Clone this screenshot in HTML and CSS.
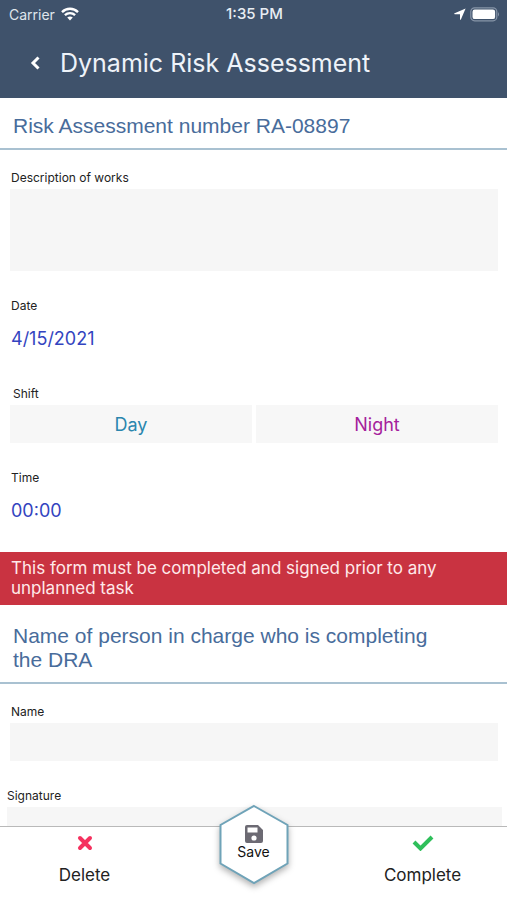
FILE: index.html
```html
<!DOCTYPE html>
<html lang="en">
<head>
<meta charset="utf-8">
<meta name="viewport" content="width=device-width, initial-scale=1">
<title>Dynamic Risk Assessment</title>
<link rel="stylesheet" href="styles.css">
</head>
<body>
<div class="app">
  <header class="header">
    <div class="status">
      <span class="carrier">Carrier
        <svg width="18" height="14" viewBox="0 0 18 14" fill="none" stroke="currentColor" stroke-width="2.4" aria-hidden="true"><path d="M1 5.1C5.5.7 12.500.7 17 5.100M3.900 8.100c2.900-2.700 7.300-2.700 10.200 0"/><path d="M9 13.400 6.200 10.600q2.800-2.200 5.600 0z" fill="currentColor" stroke="none"/></svg>
      </span>
      <span class="clock">1:35 PM</span>
      <span class="indicators">
        <svg width="12" height="12" viewBox="0 0 12 12" fill="currentColor" aria-hidden="true"><path d="M11.600.4 6.900 11.400c-.3.700-.9.500-.9-.1V6.200H.8c-.8 0-.9-.7-.2-1z"/></svg>
        <svg width="30" height="15" viewBox="0 0 30 15" aria-hidden="true"><rect x=".8" y=".8" width="26" height="13" rx="3.800" fill="none" stroke="#8795a8" stroke-width="1.200"/><rect x="2.500" y="2.500" width="22.600" height="9.600" rx="2.200" fill="#fff"/><path d="M28 5v4.600q2-2.300 0-4.600z" fill="#8795a8"/></svg>
      </span>
    </div>
    <div class="titlebar">
      <button class="back" type="button" aria-label="Back">
        <svg width="10" height="14" viewBox="0 0 10 14" fill="none" stroke="currentColor" stroke-width="3" aria-hidden="true"><path d="M8.500 1.500 3 7l5.500 5.500"/></svg>
      </button>
      <h1>Dynamic Risk Assessment</h1>
    </div>
  </header>

  <main class="form">
    <h2 class="section">Risk Assessment number RA-08897</h2>
    <div class="group">
      <div class="field">
        <label for="works">Description of works</label>
        <textarea id="works" class="box tall"></textarea>
      </div>
      <div class="field">
        <label for="date">Date</label>
        <input id="date" class="value" type="text" value="4/15/2021">
      </div>
      <div class="field" role="group" aria-labelledby="shift">
        <span id="shift" class="caption">Shift</span>
        <div class="choices">
          <button class="choice day" type="button">Day</button>
          <button class="choice night" type="button">Night</button>
        </div>
      </div>
      <div class="field">
        <label for="time">Time</label>
        <input id="time" class="value" type="text" value="00:00">
      </div>
    </div>
    <p class="alert">This form must be completed and signed prior to any unplanned task</p>
    <h2 class="section">Name of person in charge who is completing the DRA</h2>
    <div class="group">
      <div class="field">
        <label for="name">Name</label>
        <input id="name" class="box" type="text">
      </div>
      <div class="field wide">
        <label for="signature">Signature</label>
        <textarea id="signature" class="box tall"></textarea>
      </div>
    </div>
  </main>

  <footer class="actions">
    <button class="action" type="button">
      <svg width="16" height="16" viewBox="0 0 16 16" fill="none" stroke="#f5325f" stroke-width="4" stroke-linecap="round" aria-hidden="true"><path d="m3 3 10 10M13 3 3 13"/></svg>
      Delete
    </button>
    <button class="save" type="button">
      <svg class="hexagon" width="84" height="94" viewBox="0 0 84 94" aria-hidden="true"><path d="M42 8 75.500 27v38.500L42 85 8.500 65.500V27z" fill="#fff" stroke="#6fa3b8" stroke-width="2"/></svg>
      <svg width="18" height="18" viewBox="0 0 18 18" aria-hidden="true"><path fill="#6c6a73" fill-rule="evenodd" d="M2 0h11l5 5v11q0 2-2 2H2q-2 0-2-2V2q0-2 2-2zm.5 2.500v5h10v-5zM9 10.400a2.600 2.600 0 1 0 0 5.200 2.600 2.600 0 0 0 0-5.200z"/></svg>
      <span>Save</span>
    </button>
    <button class="action" type="button">
      <svg width="22" height="16" viewBox="0 0 22 16" fill="none" stroke="#2fbf5b" stroke-width="4" aria-hidden="true"><path d="m2 7 6.500 6.500L20 2"/></svg>
      Complete
    </button>
  </footer>
</div>
</body>
</html>
```
FILE: styles.css
```css
* { box-sizing: border-box; }

body {
  margin: 0;
  font-family: Inter, "Liberation Sans", sans-serif;
  color: #222;
  background: #fff;
}

button, input, textarea {
  font: inherit;
  color: inherit;
  border: 0;
  border-radius: 0;
  padding: 0;
  background: none;
}

svg { display: block; flex: none; }

.app {
  display: flex;
  flex-direction: column;
  height: 100vh;
}

.header {
  flex: none;
  background: #3f526b;
  color: #fff;
  padding-bottom: 16px;
}

.status {
  display: grid;
  grid-template-columns: 1fr auto 1fr;
  align-items: center;
  height: 28px;
  padding: 0 7px 0 9px;
}

.carrier, .indicators {
  display: flex;
  align-items: center;
  gap: 6px;
}

.carrier { font-size: 14px; color: #dfe5ec; }
.carrier svg { color: #fff; }
.clock { font-size: 15px; line-height: 20px; font-weight: 500; color: #e8edf3; }
.indicators { justify-content: flex-end; gap: 4px; }

.titlebar {
  display: flex;
  align-items: center;
  gap: 20px;
  height: 54px;
  padding: 15px 30px 0;
}

h1 {
  margin: 0;
  font-size: 25px;
  line-height: 32px;
  font-weight: 400;
  color: #eef3f9;
}

.form {
  flex: 1;
  min-height: 0;
  overflow: hidden;
}

.section {
  margin: 0;
  padding: 16px 60px 10px 13px;
  border-bottom: 2px solid #a9c1d1;
  font: 400 21px/24px "Liberation Sans", sans-serif;
  color: #486c9b;
}

.group {
  display: flex;
  flex-direction: column;
  gap: 27px;
  padding: 20px 9px 21px 10px;
}

.field {
  display: flex;
  flex-direction: column;
  gap: 3px;
}

label, .caption {
  padding-left: 1px;
  font-size: 12px;
  line-height: 16px;
}

.caption { padding-left: 3px; }

.box {
  width: 100%;
  height: 38px;
  padding: 8px;
  background: #f6f6f6;
  resize: none;
}

.tall { height: 82px; }

.value {
  height: 42px;
  padding-left: 1px;
  font-size: 18px;
  color: #3344c0;
}

.choices {
  display: grid;
  grid-template-columns: 1fr 1fr;
  gap: 4px;
}

.choice {
  height: 38px;
  background: #f7f7f7;
  font-size: 18px;
}

.day { color: #2a86ae; }
.night { color: #a5219c; }

.wide { margin: 0 -4px 0 -3px; }
.wide label { padding-left: 0; }

.alert {
  margin: 0;
  padding: 6px 60px 7px 11px;
  background: #c93341;
  color: #ffe9ea;
  font-size: 17px;
  line-height: 20px;
}

.alert + .section { padding-top: 19px; }

.actions {
  flex: none;
  display: grid;
  grid-template-columns: 1fr 1fr 1fr;
  height: 74px;
  border-top: 1px solid #b9b9b9;
}

.action {
  display: flex;
  flex-direction: column;
  align-items: center;
  gap: 12px;
  padding-top: 8px;
  font-size: 17px;
  line-height: 24px;
}

.save {
  position: relative;
  display: flex;
  flex-direction: column;
  align-items: center;
  gap: 1px;
  margin-top: -2px;
  font-size: 14px;
  line-height: 16px;
  color: #111;
}

.save > * { position: relative; }

.save .hexagon {
  position: absolute;
  top: -27px;
  left: calc(50% - 42px);
  filter: drop-shadow(0 3px 3px rgb(0 0 0 / 30%));
}
```
